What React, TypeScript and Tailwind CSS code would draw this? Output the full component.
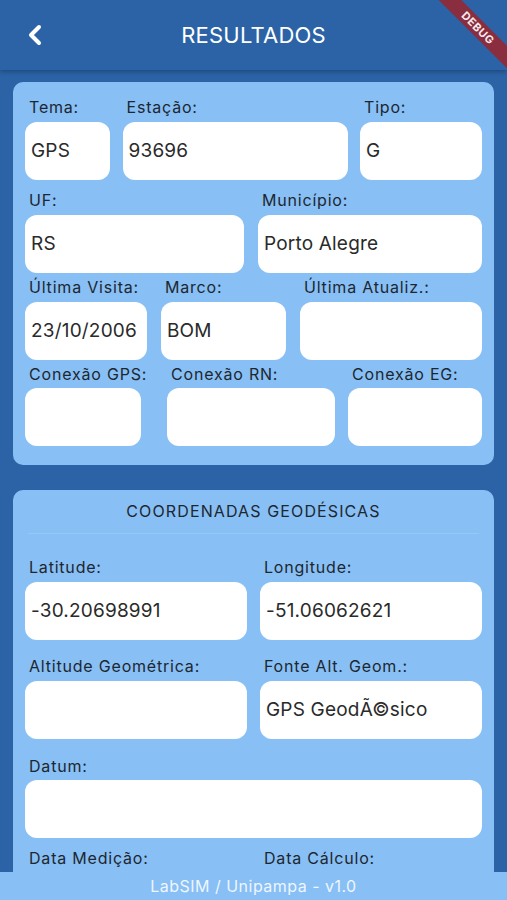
import { ChevronLeft } from 'lucide-react';

type Field = { label: string; value?: string; width: string; gap?: string };

function FieldBox({ label, value, width, gap = 'mt-[5px]' }: Field) {
  return (
    <div className={`flex shrink-0 flex-col ${width}`}>
      <div className="h-5 whitespace-nowrap pl-1 text-[16px] leading-5 tracking-[0.05em] text-[#1d2731]">{label}</div>
      <div className={`flex h-[58px] items-center rounded-[12px] bg-white px-[6px] text-[19px] tracking-[0.01em] text-[#2a2a2a] ${gap}`}>
        {value}
      </div>
    </div>
  );
}

function Row({ fields, className = '', gaps }: { fields: Field[]; className?: string; gaps?: string }) {
  return (
    <div className={`flex ${gaps ?? 'justify-between'} ${className}`}>
      {fields.map((f) => (
        <FieldBox key={f.label} {...f} />
      ))}
    </div>
  );
}

export default function App() {
  return (
    <div className="relative flex h-[900px] w-full flex-col overflow-hidden bg-[#2b63a6] font-['Inter','Liberation_Sans',sans-serif]">
      <header className="relative z-10 flex h-[70px] shrink-0 items-center bg-[#2b63a6] shadow-[0_2px_4px_rgba(0,0,0,0.25)]">
        <ChevronLeft className="ml-[19px] h-[32px] w-[32px] text-white" strokeWidth={3} />
        <h1 className="absolute left-0 right-0 text-center text-[22px] tracking-[0.01em] text-white">RESULTADOS</h1>
      </header>

      <main className="flex-1 overflow-hidden px-[13px] pt-[12px]">
        <section className="rounded-[10px] bg-[#88bff4] px-[12px] pb-[19px] pt-[15px]">
          <Row
            fields={[
              { label: 'Tema:', value: 'GPS', width: 'w-[85px]' },
              { label: 'Estação:', value: '93696', width: 'w-[225px]' },
              { label: 'Tipo:', value: 'G', width: 'w-[122px]' },
            ]}
          />
          <Row
            className="mt-[10px]"
            fields={[
              { label: 'UF:', value: 'RS', width: 'w-[219px]' },
              { label: 'Município:', value: 'Porto Alegre', width: 'w-[224px]' },
            ]}
          />
          <Row
            className="mt-[4px]"
            gaps="gap-[14px]"
            fields={[
              { label: 'Última Visita:', value: '23/10/2006', width: 'w-[122px]' },
              { label: 'Marco:', value: 'BOM', width: 'w-[125px]' },
              { label: 'Última Atualiz.:', width: 'w-[182px]', },
            ]}
          />
          <Row
            className="mt-[4px]"
            gaps="justify-between"
            fields={[
              { label: 'Conexão GPS:', width: 'w-[116px] mr-[26px]', gap: 'mt-[4px]' },
              { label: 'Conexão RN:', width: 'w-[168px]', gap: 'mt-[4px]' },
              { label: 'Conexão EG:', width: 'w-[134px] ml-[13px]', gap: 'mt-[4px]' },
            ]}
          />
        </section>

        <section className="mt-[25px] rounded-[10px] bg-[#88bff4] px-[12px] pb-[19px] pt-[11px]">
          <h2 className="text-center text-[16px] leading-5 tracking-[0.07em] text-[#1d2731]">COORDENADAS GEODÉSICAS</h2>
          <div className="mx-[3px] mt-[12px] border-t border-[#95c8f6]" />
          <Row
            className="mt-[23px]"
            fields={[
              { label: 'Latitude:', value: '-30.20698991', width: 'w-[222px]' },
              { label: 'Longitude:', value: '-51.06062621', width: 'w-[222px]' },
            ]}
          />
          <Row
            className="mt-[16px]"
            fields={[
              { label: 'Altitude Geométrica:', width: 'w-[222px]' },
              { label: 'Fonte Alt. Geom.:', value: 'GPS GeodÃ©sico', width: 'w-[222px]' },
            ]}
          />
          <Row className="mt-[17px]" fields={[{ label: 'Datum:', width: 'w-full', gap: 'mt-[4px]' }]} />
          <Row
            className="mt-[10px]"
            fields={[
              { label: 'Data Medição:', width: 'w-[222px]' },
              { label: 'Data Cálculo:', width: 'w-[222px]' },
            ]}
          />
        </section>
      </main>

      <footer className="relative z-10 flex h-[28px] shrink-0 items-center justify-center bg-[#88bff4] text-[16px] tracking-[0.03em] text-[#eef6fe]">
        LabSIM / Unipampa - v1.0
      </footer>

      <div className="pointer-events-none absolute right-[-31px] top-[20px] z-20 w-[120px] rotate-45 bg-[#8a2d3f] py-[2px] text-center text-[11px] font-bold leading-[12px] tracking-[0.05em] text-[#f5e9ec]">
        DEBUG
      </div>
    </div>
  );
}
